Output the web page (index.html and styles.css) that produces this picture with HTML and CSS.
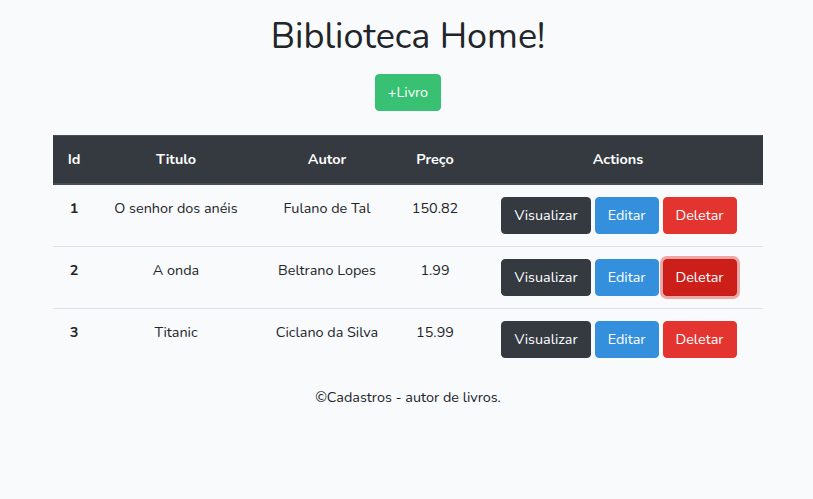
FILE: index.html
```html
<!DOCTYPE html>
<html lang="pt">
<head>
<meta charset="utf-8">
<title>Biblioteca Home!</title>
<link rel="stylesheet" href="styles.css">
</head>
<body>
<div class="page">
  <h1 class="title">Biblioteca Home!</h1>
  <div class="add-row"><a class="btn btn-success" href="#">+Livro</a></div>
  <table class="table">
    <thead>
      <tr>
        <th class="c-id">Id</th>
        <th class="c-titulo">Titulo</th>
        <th class="c-autor">Autor</th>
        <th class="c-preco">Preço</th>
        <th class="c-actions">Actions</th>
      </tr>
    </thead>
    <tbody>
      <tr>
        <th>1</th>
        <td>O senhor dos anéis</td>
        <td>Fulano de Tal</td>
        <td>150.82</td>
        <td><div class="actions"><a class="btn btn-dark" href="#">Visualizar</a><a class="btn btn-primary" href="#">Editar</a><a class="btn btn-danger" href="#">Deletar</a></div></td>
      </tr>
      <tr>
        <th>2</th>
        <td>A onda</td>
        <td>Beltrano Lopes</td>
        <td>1.99</td>
        <td><div class="actions"><a class="btn btn-dark" href="#">Visualizar</a><a class="btn btn-primary" href="#">Editar</a><a class="btn btn-danger is-focused" href="#">Deletar</a></div></td>
      </tr>
      <tr>
        <th>3</th>
        <td>Titanic</td>
        <td>Ciclano da Silva</td>
        <td>15.99</td>
        <td><div class="actions"><a class="btn btn-dark" href="#">Visualizar</a><a class="btn btn-primary" href="#">Editar</a><a class="btn btn-danger" href="#">Deletar</a></div></td>
      </tr>
    </tbody>
  </table>
  <p class="footer">©Cadastros - autor de livros.</p>
</div>
</body>
</html>
```

FILE: styles.css
```css
* { box-sizing: border-box; }
html, body {
  margin: 0;
  background: #f8fafc;
}
body {
  font-family: "Nunito", "Lato", "Noto Sans", sans-serif;
  font-size: 14.4px;
  line-height: 1.6;
  color: #212529;
}
.page {
  width: 710px;
  margin: 0 auto;
  position: relative;
  left: 1.5px;
  padding-top: 15px;
  display: flex;
  flex-direction: column;
  align-items: stretch;
}
.title {
  margin: 0;
  font-size: 36px;
  font-weight: 400;
  line-height: 1.2;
  text-align: center;
}
.add-row {
  display: flex;
  justify-content: center;
  padding-top: 16px;
  padding-bottom: 24px;
}
.btn {
  display: inline-block;
  padding: 6px 12px;
  font-size: 14.4px;
  line-height: 1.6;
  color: #fff;
  text-decoration: none;
  border: 1px solid transparent;
  border-radius: 4px;
  white-space: nowrap;
}
.btn-success { background: #38c172; border-color: #38c172; }
.btn-dark { background: #343a40; border-color: #343a40; }
.btn-primary { background: #3490dc; border-color: #3490dc; }
.btn-danger { background: #e3342f; border-color: #e3342f; }
.btn-danger.is-focused {
  background: #cc1f1a;
  border-color: #c11e19;
  box-shadow: 0 0 0 3px rgba(231, 82, 78, 0.5);
}
.table {
  width: 100%;
  border-collapse: collapse;
  margin-bottom: 16px;
}
.table th, .table td {
  padding: 12px;
  text-align: center;
  vertical-align: top;
  border-top: 1px solid #dee2e6;
}
.table thead th {
  background: #343a40;
  color: #fff;
  border-color: #454d55;
  border-bottom: 2px solid #454d55;
  font-weight: 700;
}
.table tbody th { font-weight: 700; }
.c-id { width: 42px; }
.c-titulo { width: 162px; }
.c-autor { width: 140px; }
.c-preco { width: 76px; }
.actions {
  display: flex;
  justify-content: center;
  gap: 4px;
  padding-left: 2px;
}
.footer {
  margin: 0;
  text-align: center;
}
```
